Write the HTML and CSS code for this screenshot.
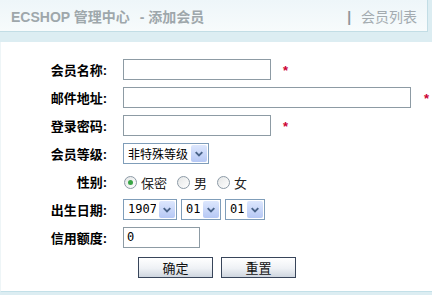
FILE: index.html
```html
<!DOCTYPE html>
<html lang="zh-CN">
<head>
    <meta charset="UTF-8">
    <title>ECSHOP 管理中心 - 添加会员</title>
    <link rel="stylesheet" href="styles.css">
</head>
<body>
    <div class="header">
        <span class="title">ECSHOP 管理中心 <span class="sub">- 添加会员</span></span>
        <a class="action" href="#"><b>|</b> 会员列表</a>
    </div>

    <div class="main">
        <form class="user-form">
            <div class="row">
                <label class="label">会员名称:</label>
                <input class="text" type="text">
                <span class="req">*</span>
            </div>
            <div class="row">
                <label class="label">邮件地址:</label>
                <input class="text wide" type="text">
                <span class="req req-wide">*</span>
            </div>
            <div class="row">
                <label class="label">登录密码:</label>
                <input class="text" type="password">
                <span class="req">*</span>
            </div>
            <div class="row">
                <label class="label">会员等级:</label>
                <span class="select rank">
                    <select><option>非特殊等级</option></select>
                    <svg class="arrow" width="16" height="18" viewBox="0 0 16 18"><path d="M4.5 7.5 L8 11 L11.5 7.5" fill="none" stroke="#4a6489" stroke-width="2"/></svg>
                </span>
            </div>
            <div class="row">
                <label class="label">性别:</label>
                <label class="radio"><input type="radio" name="sex" checked> 保密</label>
                <label class="radio"><input type="radio" name="sex"> 男</label>
                <label class="radio"><input type="radio" name="sex"> 女</label>
            </div>
            <div class="row">
                <label class="label">出生日期:</label>
                <span class="select year">
                    <select><option>1907</option></select>
                    <svg class="arrow" width="16" height="18" viewBox="0 0 16 18"><path d="M4.5 7.5 L8 11 L11.5 7.5" fill="none" stroke="#4a6489" stroke-width="2"/></svg>
                </span>
                <span class="select day">
                    <select><option>01</option></select>
                    <svg class="arrow" width="16" height="18" viewBox="0 0 16 18"><path d="M4.5 7.5 L8 11 L11.5 7.5" fill="none" stroke="#4a6489" stroke-width="2"/></svg>
                </span>
                <span class="select day">
                    <select><option>01</option></select>
                    <svg class="arrow" width="16" height="18" viewBox="0 0 16 18"><path d="M4.5 7.5 L8 11 L11.5 7.5" fill="none" stroke="#4a6489" stroke-width="2"/></svg>
                </span>
            </div>
            <div class="row">
                <label class="label">信用额度:</label>
                <input class="text credit" type="text" value="0">
            </div>
            <div class="buttons">
                <button type="submit">确定</button>
                <button type="reset">重置</button>
            </div>
        </form>
    </div>
</body>
</html>
```

FILE: styles.css
```css
* {
    margin: 0;
    padding: 0;
    box-sizing: border-box;
}

body {
    background: #dcedf2;
    font-family: "Liberation Sans", "Noto Sans CJK SC", sans-serif;
    font-size: 12px;
    color: #000;
    height: 295px;
    overflow: hidden;
}

.header {
    height: 32px;
    margin-right: 4px;
    background: linear-gradient(#eef6f9, #f7fbfc);
    border-right: 1px solid #c2dde5;
    border-bottom: 1px solid #c2dde5;
    display: flex;
    align-items: center;
    justify-content: space-between;
    padding: 0 10px 0 11px;
}

.title {
    font-size: 14px;
    font-weight: bold;
    color: #9ea7ab;
    padding-top: 1px;
}

.title .sub {
    margin-left: 6px;
}

.action {
    font-size: 14px;
    color: #a3abb0;
    text-decoration: none;
}

.action b {
    color: #8f979b;
    margin-right: 6px;
}

.main {
    margin-top: 10px;
    height: 250px;
    background: #fff;
    border-left: 1px solid #eef5f7;
    border-bottom: 1px solid #c3e0e8;
    padding: 13px 0 0 2px;
}

.row {
    height: 28px;
    display: flex;
    align-items: center;
}

.label {
    width: 104px;
    text-align: right;
    font-weight: bold;
    margin-right: 16px;
    font-size: 13px;
}

.text {
    width: 148px;
    height: 21px;
    border: 1px solid #8d9ba4;
    font-size: 12px;
    padding: 0 3px;
    font-family: "DejaVu Sans Mono", monospace;
    outline: none;
}

.text.wide {
    width: 288px;
}

.text.credit {
    width: 77px;
}

.req {
    color: #cc0033;
    font-size: 13px;
    font-weight: bold;
    margin-left: 12px;
    margin-top: 2px;
}

.req.req-wide {
    margin-left: 13px;
}

.select {
    position: relative;
    display: inline-block;
    height: 21px;
    margin-right: 4px;
}

.select select {
    appearance: none;
    -webkit-appearance: none;
    height: 21px;
    border: 1px solid #7f9db9;
    background: #fff;
    font-size: 12px;
    padding: 0 20px 0 4px;
    font-family: "DejaVu Sans Mono", "Noto Sans CJK SC", monospace;
    color: #000;
    border-radius: 0;
    outline: none;
}

.select.rank select {
    width: 86px;
    font-family: "Noto Sans CJK SC", sans-serif;
}

.select.year select {
    width: 54px;
}

.select.day select {
    width: 40px;
}

.arrow {
    position: absolute;
    right: 2px;
    top: 2px;
    width: 16px;
    height: 17px;
    background: linear-gradient(#dde7fd, #b6c8f5);
    border-radius: 2px;
    pointer-events: none;
}

.radio {
    display: inline-flex;
    align-items: center;
    margin-right: 9px;
    font-size: 13px;
    color: #222;
    padding-top: 3px;
}

.radio input {
    appearance: none;
    -webkit-appearance: none;
    width: 13px;
    height: 13px;
    border: 1px solid #8c9aa6;
    border-radius: 50%;
    background: linear-gradient(135deg, #e4e6e6, #fff);
    margin: 0 4px 0 1px;
    position: relative;
}

.radio input:checked::after {
    content: "";
    position: absolute;
    left: 3px;
    top: 3px;
    width: 5px;
    height: 5px;
    border-radius: 50%;
    background: #39a545;
}

.buttons {
    display: flex;
    gap: 8px;
    padding: 6px 0 0 135px;
}

button {
    width: 75px;
    height: 21px;
    border: 1px solid #38455a;
    background: linear-gradient(#ffffff, #eef1f5 55%, #cfd6df);
    font-size: 13px;
    font-family: "Noto Sans CJK SC", sans-serif;
    color: #111;
    cursor: pointer;
}
```
